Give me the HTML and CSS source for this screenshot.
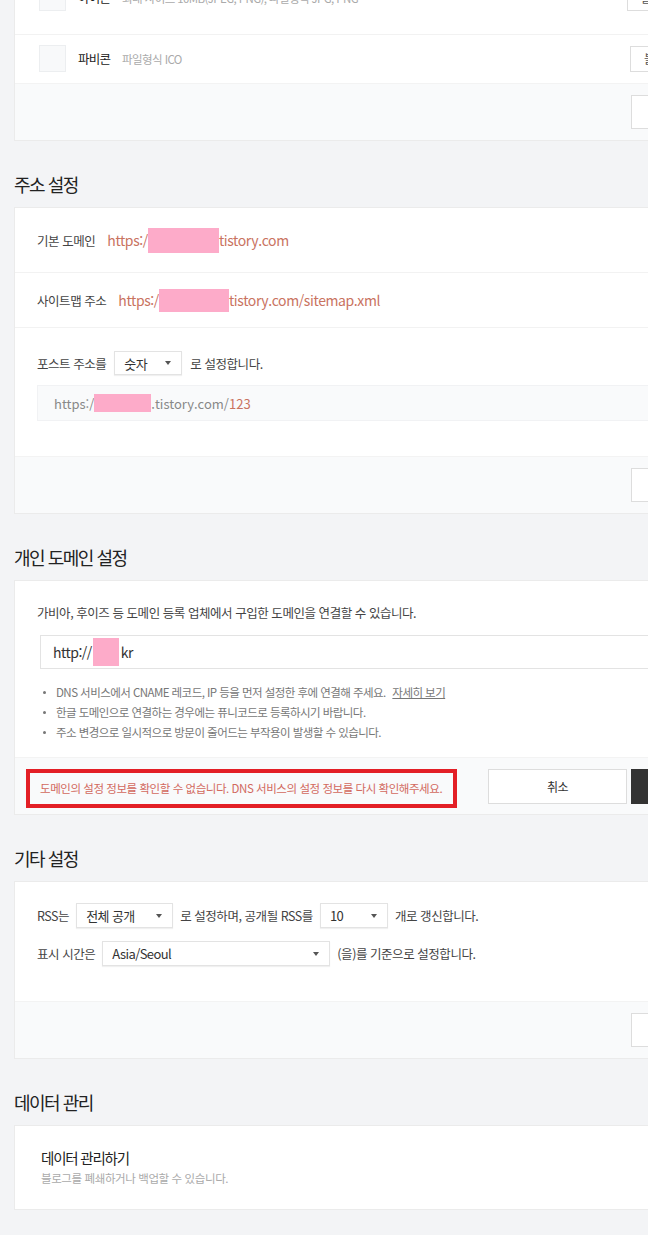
FILE: index.html
```html
<!DOCTYPE html>
<html lang="ko">
<head>
<meta charset="utf-8">
<title>블로그 설정</title>
<link rel="stylesheet" href="styles.css">
</head>
<body>
<main class="page">
  <section class="card card--top">
    <div class="item-row item-row--icon">
      <span class="thumb"></span>
      <span class="item-name">아이콘</span>
      <span class="item-desc">최대 사이즈 10MB(JPEG, PNG), 파일형식 JPG, PNG</span>
      <button class="btn-file btn-file--icon">불러오기</button>
    </div>
    <div class="item-row item-row--fav">
      <span class="thumb"></span>
      <span class="item-name">파비콘</span>
      <span class="item-desc">파일형식 ICO</span>
      <button class="btn-file">불러오기</button>
    </div>
    <div class="card-foot"><button class="btn">변경사항 저장</button></div>
  </section>

  <h2 class="sec-title">주소 설정</h2>
  <section class="card">
    <div class="addr-row addr-row--first">
      <span class="label">기본 도메인</span>
      <span class="url">https:/<span class="mask mask--domain"></span>tistory.com</span>
    </div>
    <div class="addr-row addr-row--second">
      <span class="label">사이트맵 주소</span>
      <span class="url">https:/<span class="mask mask--sitemap"></span>tistory.com/sitemap.xml</span>
    </div>
    <div class="post-row">
      <div class="line">
        <span class="label">포스트 주소를</span>
        <span class="select sel-num"><span>숫자</span><i class="caret"></i></span>
        <span class="label">로 설정합니다.</span>
      </div>
      <div class="preview">https:/<span class="mask mask--preview"></span>.tistory.com/<span class="hl">123</span></div>
    </div>
    <div class="card-foot"><button class="btn">변경사항 저장</button></div>
  </section>

  <h2 class="sec-title">개인 도메인 설정</h2>
  <section class="card">
    <div class="domain-body">
      <p class="desc">가비아, 후이즈 등 도메인 등록 업체에서 구입한 도메인을 연결할 수 있습니다.</p>
      <div class="domain-input">http://<span class="mask mask--input"></span>kr</div>
      <ul class="notes">
        <li>DNS 서비스에서 CNAME 레코드, IP 등을 먼저 설정한 후에 연결해 주세요. <a class="more" href="#">자세히 보기</a></li>
        <li>한글 도메인으로 연결하는 경우에는 퓨니코드로 등록하시기 바랍니다.</li>
        <li>주소 변경으로 일시적으로 방문이 줄어드는 부작용이 발생할 수 있습니다.</li>
      </ul>
    </div>
    <div class="card-foot card-foot--error">
      <p class="error">도메인의 설정 정보를 확인할 수 없습니다. DNS 서비스의 설정 정보를 다시 확인해주세요.</p>
      <div class="actions">
        <button class="btn">취소</button>
        <button class="btn btn--dark">저장</button>
      </div>
    </div>
  </section>

  <h2 class="sec-title">기타 설정</h2>
  <section class="card">
    <div class="etc-body">
      <div class="line">
        <span class="label">RSS는</span>
        <span class="select sel-rss"><span>전체 공개</span><i class="caret"></i></span>
        <span class="label">로 설정하며, 공개될 RSS를</span>
        <span class="select sel-num"><span>10</span><i class="caret"></i></span>
        <span class="label">개로 갱신합니다.</span>
      </div>
      <div class="line">
        <span class="label">표시 시간은</span>
        <span class="select sel-tz"><span>Asia/Seoul</span><i class="caret"></i></span>
        <span class="label">(을)를 기준으로 설정합니다.</span>
      </div>
    </div>
    <div class="card-foot"><button class="btn">변경사항 저장</button></div>
  </section>

  <h2 class="sec-title">데이터 관리</h2>
  <section class="card">
    <div class="data-body">
      <p class="data-title">데이터 관리하기</p>
      <p class="data-sub">블로그를 폐쇄하거나 백업할 수 있습니다.</p>
    </div>
  </section>
</main>
</body>
</html>
```

FILE: styles.css
```css
html, body {
  overflow: hidden;
}
body {
  margin: 0;
  background: #f3f4f6;
  font-family: "Noto Sans CJK KR", "Noto Sans", sans-serif;
  color: #333;
}
.page {
  width: 780px;
  padding-left: 14px;
}
.card {
  background: #fff;
  border: 1px solid #ebebeb;
}
.card--top {
  margin-top: -41px;
}
.sec-title {
  margin: 31px 0 11px;
  font-size: 18px;
  line-height: 24px;
  font-weight: 400;
  letter-spacing: -1.5px;
  color: #222;
}

/* item rows */
.item-row {
  display: flex;
  align-items: center;
  padding: 10px 93px 11px 24px;
}
.item-row--icon {
  padding-top: 24px;
  padding-bottom: 23px;
  border-bottom: 1px solid #f2f2f2;
}
.thumb {
  width: 25px;
  height: 25px;
  border: 1px solid #eceef0;
  background: #f8f9fa;
  flex: none;
}
.item-name {
  margin-left: 12px;
  font-size: 12.5px;
  letter-spacing: -0.8px;
  color: #222;
}
.item-desc {
  margin-left: 12px;
  font-size: 11.5px;
  letter-spacing: -0.6px;
  color: #aaa;
}
.btn-file {
  margin-left: auto;
  width: 70px;
  height: 26px;
  border: 1px solid #ddd;
  background: #fff;
  font: inherit;
  font-size: 12px;
  letter-spacing: -0.5px;
  color: #555;
}
.btn-file--icon {
  margin-right: 3px;
}

.card-foot {
  display: flex;
  justify-content: flex-end;
  height: 57px;
  box-sizing: border-box;
  padding: 11px 23px 0 11px;
  background: #f9fafb;
  border-top: 1px solid #f3f3f3;
}
.card-foot--error {
  justify-content: space-between;
  align-items: flex-start;
}
.btn {
  flex: none;
  width: 139px;
  height: 34px;
  border: 1px solid #ddd;
  background: #fff;
  font: inherit;
  font-size: 12px;
  letter-spacing: -0.5px;
  color: #333;
}
.actions {
  flex: none;
  display: flex;
  gap: 4px;
}
.actions .btn {
  height: 35px;
}
.actions .btn--dark {
  background: #333;
  border-color: #333;
  color: #fff;
}
.error {
  flex: none;
  margin: 0;
  height: 31px;
  border: 4px solid #e31f26;
  padding: 0 11px 0 10px;
  font-size: 11.5px;
  line-height: 31px;
  letter-spacing: -0.45px;
  white-space: nowrap;
  color: #d2695e;
}

/* address */
.label {
  font-size: 12.5px;
  letter-spacing: -0.45px;
  color: #444;
  white-space: nowrap;
}
.url {
  margin-left: 12px;
  font-size: 14px;
  letter-spacing: -0.4px;
  color: #c9735f;
  display: inline-flex;
  align-items: center;
}
.addr-row {
  display: flex;
  align-items: center;
  padding: 0 22px;
  border-bottom: 1px solid #f2f2f2;
}
.addr-row--first {
  height: 64px;
}
.addr-row--second {
  height: 54px;
}
.mask {
  display: inline-block;
  background: #fdabc9;
}
.mask--domain {
  width: 71px;
  height: 25px;
}
.mask--sitemap {
  width: 70px;
  height: 23px;
}
.mask--preview {
  width: 57px;
  height: 18px;
}
.mask--input {
  width: 26px;
  height: 28px;
  margin: 0 2px 0 1px;
}
.post-row {
  padding: 23px 22px 35px;
}
.line {
  display: flex;
  align-items: center;
  gap: 8px;
}
.select {
  box-sizing: border-box;
  height: 25px;
  display: inline-flex;
  align-items: center;
  justify-content: space-between;
  padding: 0 10px 0 9px;
  border: 1px solid #e3e3e3;
  box-shadow: 0 1px 1px rgba(0, 0, 0, 0.06);
  background: #fff;
  font-size: 13px;
  letter-spacing: -0.6px;
  color: #333;
}
.post-row .select {
  height: 24px;
}
.sel-num {
  width: 68px;
}
.sel-rss {
  width: 97px;
}
.sel-tz {
  width: 228px;
}
.caret {
  width: 0;
  height: 0;
  border-left: 3px solid transparent;
  border-right: 3px solid transparent;
  border-top: 4px solid #555;
}
.preview {
  margin-top: 10px;
  height: 36px;
  box-sizing: border-box;
  display: flex;
  align-items: center;
  padding-left: 16px;
  background: #f9fafb;
  border: 1px solid #f1f2f4;
  font-size: 13px;
  color: #888;
}
.hl {
  color: #c9735f;
}

/* personal domain */
.domain-body {
  padding: 22px 22px 15px;
}
.desc {
  margin: 0;
  font-size: 12.5px;
  line-height: 20px;
  letter-spacing: -0.45px;
  color: #444;
}
.domain-input {
  margin: 12px 0 0 3px;
  height: 34px;
  box-sizing: border-box;
  display: flex;
  align-items: center;
  padding-left: 12px;
  border: 1px solid #e3e3e3;
  font-size: 14px;
  letter-spacing: -0.5px;
  color: #333;
}
.notes {
  margin: 13px 0 0;
  padding: 0 0 0 19px;
  list-style: none;
}
.notes li {
  position: relative;
  font-size: 11.5px;
  line-height: 20px;
  letter-spacing: -0.55px;
  color: #777;
}
.notes li::before {
  content: "";
  position: absolute;
  left: -13px;
  top: 9px;
  width: 3px;
  height: 3px;
  border-radius: 50%;
  background: #777;
}
.more {
  margin-left: 4px;
  color: #777;
  text-decoration: underline;
}

/* etc */
.etc-body {
  padding: 21px 22px 35px;
  display: flex;
  flex-direction: column;
  gap: 13px;
}
.etc-body .line {
  gap: 7px;
}

/* data */
.data-body {
  padding: 21px 26px 22px;
}
.data-title {
  margin: 0;
  font-size: 14.5px;
  line-height: 22px;
  letter-spacing: -1.2px;
  color: #222;
}
.data-sub {
  margin: 0;
  font-size: 11.5px;
  line-height: 18px;
  letter-spacing: -0.4px;
  color: #aaa;
}
```
